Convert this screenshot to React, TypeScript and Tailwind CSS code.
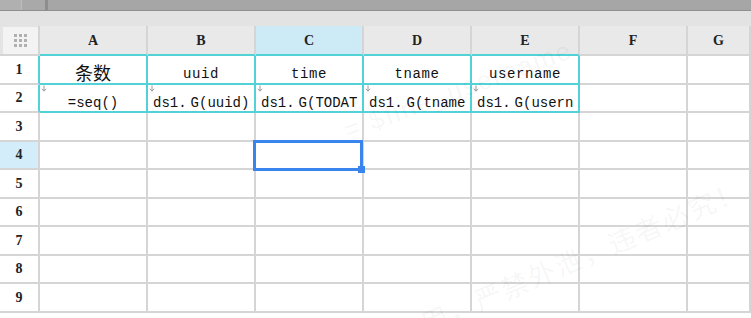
import React from "react";

const cols = ["A", "B", "C", "D", "E", "F", "G"];
const TEAL = "border-[#52d1d7]";
const GRID = "border-[#d5d5d5]";

const row1: Record<string, string> = {
  A: "条数",
  B: "uuid",
  C: "time",
  D: "tname",
  E: "username",
};

// formulas of row 2, split after "ds1." so the gap before G shows
const row2: Record<string, string> = {
  B: "G(uuid)",
  C: "G(TODATE(time))",
  D: "G(tname)",
  E: "G(username)",
};

const DownMark = () => (
  <svg
    width="6"
    height="7"
    viewBox="0 0 6 7"
    className="absolute left-[1px] top-[0px]"
  >
    <path d="M3 0.5V6M0.8 3.8L3 6.2L5.2 3.8" stroke="#9a9a9a" strokeWidth="1" fill="none" />
  </svg>
);

const CornerDots = () => (
  <div className="grid grid-cols-3 gap-[2px]">
    {Array.from({ length: 9 }).map((_, i) => (
      <div key={i} className="w-[3px] h-[3px] bg-[#b0b0b0]" />
    ))}
  </div>
);

function HeaderRow() {
  return (
    <div className="flex h-[30px] bg-[#e4e4e4]">
      <div className={`w-[40px] shrink-0 pl-[3px] pt-[1px] border-b-2 border-r-2 ${GRID}`}>
        <div className="h-full bg-[#f3f3f3] flex items-center justify-center">
          <CornerDots />
        </div>
      </div>
      {cols.map((c, i) => {
        const inRange = i < 5;
        const sel = c === "C";
        return (
          <div
            key={c}
            className={`${c === "G" ? "flex-1" : "w-[108px] shrink-0"} flex items-center justify-center border-r-2 border-r-[#d5d5d5] border-b-2 ${
              inRange ? "border-b-[#52d1d7]" : "border-b-[#d5d5d5]"
            } ${sel ? "bg-[#cdeaf7]" : "bg-[#e9e9e9]"} font-['Liberation_Serif',serif] font-bold text-[14px] text-[#222] pt-[1px]`}
          >
            {c}
          </div>
        );
      })}
    </div>
  );
}

function Row({ n }: { n: number }) {
  const data = n === 1 || n === 2;
  return (
    <div className="flex h-[28.5px]">
      <div
        className={`w-[40px] shrink-0 flex items-center justify-center border-b-2 ${GRID} border-r-2 ${
          data ? "border-r-[#52d1d7]" : "border-r-[#d5d5d5]"
        } ${n === 4 ? "bg-[#d3eefa]" : "bg-white"} font-['Liberation_Serif',serif] font-bold text-[14px] text-[#222]`}
      >
        {n}
      </div>
      {cols.map((c, i) => {
        const teal = data && i < 5;
        const border = teal ? TEAL : GRID;
        const w = c === "G" ? "flex-1" : "w-[108px] shrink-0";
        if (n === 1 && teal) {
          const cjk = c === "A";
          return (
            <div
              key={c}
              className={`${w} border-r-2 border-b-2 ${border} flex justify-center overflow-hidden whitespace-nowrap ${
                cjk
                  ? "pt-[7px] font-['Noto_Sans_CJK_SC',sans-serif] text-[18px] leading-none text-[#111]"
                  : "pt-[11px] font-['Liberation_Mono',monospace] text-[14px] tracking-[0.6px] leading-none text-[#111]"
              }`}
            >
              {row1[c]}
            </div>
          );
        }
        if (n === 2 && teal) {
          return (
            <div
              key={c}
              className={`${w} relative border-r-2 border-b-2 ${border} overflow-hidden break-all [line-break:anywhere] pt-[10px] font-['Liberation_Mono',monospace] text-[14px] leading-[16px] text-[#111] ${
                c === "A" ? "text-center" : "text-left pl-[5px]"
              }`}
            >
              <DownMark />
              {c === "A" ? (
                "=seq()"
              ) : (
                <>
                  ds1.<span className="pl-[4px]">{row2[c]}</span>
                </>
              )}
            </div>
          );
        }
        return (
          <div key={c} className={`${w} relative border-r-2 border-b-2 ${border} bg-white`}>
            {n === 4 && c === "C" && (
              <div className="absolute left-[-3px] top-[-2px] right-[-1px] bottom-[-3px] border-[3px] border-[#3a84ee] z-10">
                <div className="absolute right-[-5px] bottom-[-5px] w-[7px] h-[7px] bg-[#3a84ee]" />
              </div>
            )}
          </div>
        );
      })}
    </div>
  );
}

export default function App() {
  return (
    <div className="relative w-[751px] h-[318px] overflow-hidden bg-white">
      {/* window strip */}
      <div className="flex h-[11px] border-b border-[#8f8f8f]">
        <div className="w-[22px] bg-[#b0b0b0] border-r border-[#bdbdbd]" />
        <div className="w-[23px] bg-[#a9a9a9]" />
        <div className="w-[3px] bg-[#8d8d8d]" />
        <div className="flex-1 bg-[#a6a6a6]" />
      </div>
      <div className="h-[15px] bg-[#e3e3e3]" />

      <HeaderRow />
      {[1, 2, 3, 4, 5, 6, 7, 8, 9].map((n) => (
        <Row key={n} n={n} />
      ))}

      {/* watermark */}
      <div className="pointer-events-none absolute left-[345px] top-[112px] origin-left -rotate-[20deg] font-['Liberation_Sans',sans-serif] text-[26px] tracking-[2px] text-black/[0.05] whitespace-nowrap">
        = $fine_username
      </div>
      <div className="pointer-events-none absolute left-[342px] top-[338px] origin-left -rotate-[23deg] font-['Noto_Sans_CJK_SC',sans-serif] text-[27px] tracking-[2px] text-black/[0.05] whitespace-nowrap">
        内部使用，严禁外泄，违者必究！
      </div>
    </div>
  );
}
